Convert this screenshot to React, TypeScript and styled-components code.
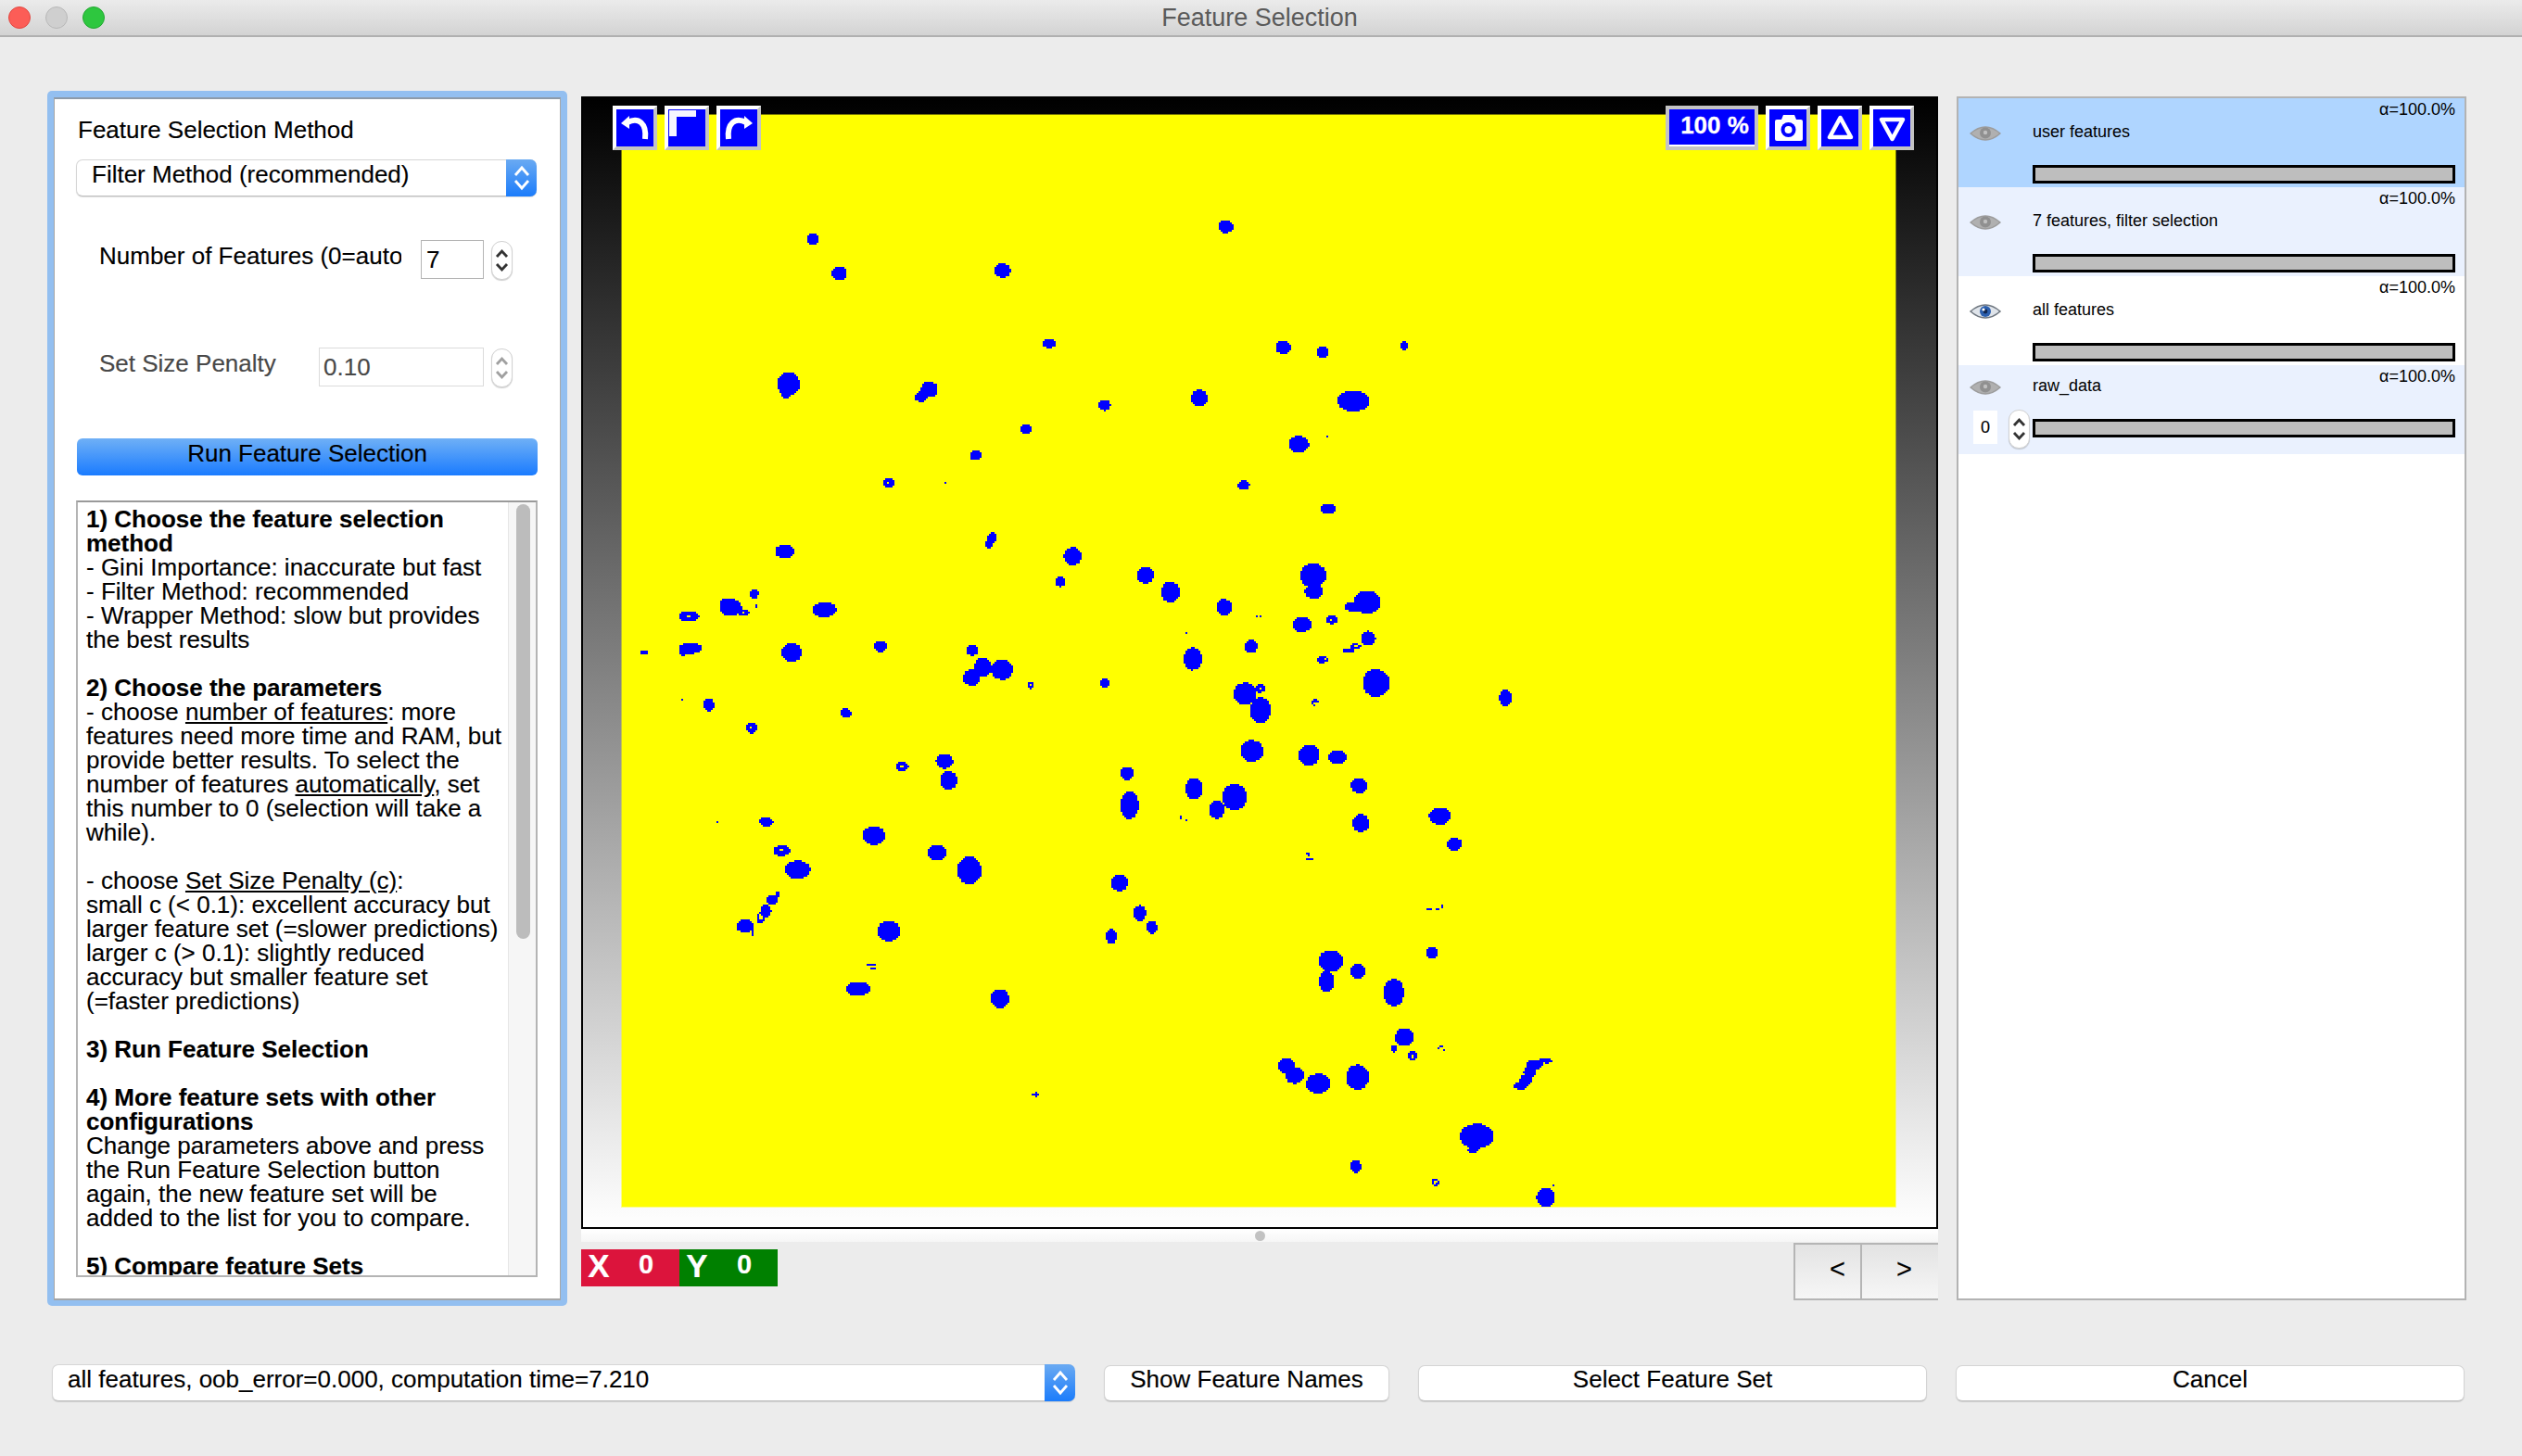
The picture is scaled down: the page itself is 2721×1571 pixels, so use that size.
import React from "react";
import styled, { createGlobalStyle } from "styled-components";

const IMG_W = 1374;
const IMG_H = 1178;
const IMG_X = 671;
const IMG_Y = 124;
const CELL = 2;

type Blob = [number, number, number, number];
interface Zone { ox: number; oy: number; fx: number; fy: number; blobs: Blob[]; holes?: Blob[] }

const zones: Zone[] = [
  {
    ox: 670, oy: 200, fx: 2.24, fy: 2.613,
    blobs: [
      [463,151,14,16],[527,248,18,19],[922,240,19,20],[1462,116,18,18],[1035,446,16,13],
      [405,560,27,32],[399,590,12,10],[745,575,20,22],[725,598,15,12],[733,588,14,14],[1169,620,14,15],
      [1398,600,20,23],[978,687,14,13],[857,761,14,14],[647,838,13,13],[783,838,2,2],
      [1505,845,14,14],[897,993,10,14],[889,1010,9,12],[395,1032,22,19],[1092,1046,21,25],
      [1062,1118,11,14],[1267,1099,20,23],[1328,1147,22,29],[1458,1190,18,23],[1536,1215,2,2],
      [1545,1215,2,2],[1368,1264,3,3],[1523,1300,15,18],[1382,1335,22,31],[322,1152,10,13],
      [165,1215,24,15],[265,1190,26,24],[250,1178,10,12],[295,1204,14,9],[334,1176,2,4],[328,1186,3,3],
      [492,1196,28,21],[168,1305,27,15],[150,1310,10,16],[56,1318,9,6],[413,1317,24,26],
      [627,1300,15,15],[849,1311,14,15],[875,1358,20,26],[847,1388,20,22],[921,1365,26,28],
      [990,1410,8,10],[1169,1403,11,12],[1508,1433,27,30],[1545,1418,12,12],[1545,1480,25,35],
      [147,1449,2,2],[212,1464,13,18],[543,1488,13,13],
    ],
    holes: [[645,838,2,2],[163,1215,5,3],[295,1204,3,3],[325,1152,2,3],[990,1410,2,3],[1545,1418,3,3],[55,1323,3,2]],
  },
  {
    ox: 1370, oy: 200, fx: 2.24, fy: 2.613,
    blobs: [
      [32,457,18,18],[128,470,13,16],[325,452,8,12],[202,608,38,29],[70,730,24,23],[138,708,2,2],
      [140,912,18,14],[105,1100,31,33],[107,1145,22,20],[235,1175,32,32],[205,1188,24,13],
      [78,1238,22,21],[150,1225,13,12],[238,1277,17,20],[190,1311,13,7],[207,1300,14,7],
      [127,1337,13,10],[257,1403,32,38],[110,1458,10,9],[570,1445,15,23],
    ],
    holes: [[148,1225,3,3],[208,1298,3,3],[325,445,2,8],[135,1337,6,2],[112,1462,5,4]],
  },
  {
    ox: 670, oy: 780, fx: 2.24, fy: 2.904,
    blobs: [
      [315,15,13,17],[782,120,20,22],[680,137,15,14],[792,180,20,28],[1525,88,27,33],[1223,158,17,20],
      [1229,258,22,42],[1385,206,21,32],[1483,232,29,40],[1440,272,18,28],[1353,295,2,6],[1365,304,2,2],
      [233,311,2,3],[351,310,16,15],[611,353,27,28],[764,407,22,25],[388,400,20,16],[842,462,29,42],
      [427,460,30,28],[1205,501,20,26],[1254,596,15,24],[1283,640,13,20],[1185,668,13,23],[378,537,5,8],
      [365,555,12,16],[350,590,13,20],[338,612,9,18],[300,637,20,21],[317,655,2,12],[647,652,27,32],[605,758,10,2],[610,769,6,2],
      [573,833,28,22],[916,864,22,29],[1004,1165,5,8],[995,1163,2,2],
    ],
    holes: [[678,137,4,3],[387,398,4,3],[315,15,3,3],[338,608,3,10]],
  },
  {
    ox: 1370, oy: 780, fx: 2.24, fy: 2.904,
    blobs: [
      [95,101,25,32],[163,107,22,21],[216,197,20,23],[220,314,20,27],[411,292,26,26],[446,380,18,20],
      [92,412,3,5],[96,426,8,3],[385,585,6,3],[405,583,4,2],[416,575,2,6],[392,720,13,17],
      [147,746,29,33],[137,810,18,34],[213,778,18,23],[300,845,24,42],[325,985,22,27],[300,1020,6,12],
      [415,1012,3,4],[408,1018,2,2],[420,1024,2,2],[345,1043,11,13],[40,1075,20,24],[60,1105,22,25],
      [117,1130,29,30],[212,1110,27,38],[665,1058,16,9],[640,1070,20,15],[628,1095,14,20],[618,1120,14,18],[605,1137,15,12],
      [500,1295,40,38],[490,1340,12,8],[208,1390,13,20],[400,1440,10,10],[667,1487,22,30],[685,1448,2,2],
    ],
    holes: [[345,1043,2,6],[400,1440,4,4],[663,1066,2,2]],
  },
];

function buildBlobPath(): string {
  const cols = Math.ceil(IMG_W / CELL);
  const rows = Math.ceil(IMG_H / CELL);
  const filled = new Set<number>();
  const apply = (b: Blob, z: Zone, add: boolean) => {
    const cx = z.ox + b[0] / z.fx - IMG_X;
    const cy = z.oy + b[1] / z.fy - IMG_Y;
    const rx = b[2] / z.fx;
    const ry = b[3] / z.fy;
    const c0 = Math.max(0, Math.floor((cx - rx) / CELL));
    const c1 = Math.min(cols - 1, Math.ceil((cx + rx) / CELL));
    const r0 = Math.max(0, Math.floor((cy - ry) / CELL));
    const r1 = Math.min(rows - 1, Math.ceil((cy + ry) / CELL));
    for (let r = r0; r <= r1; r++) {
      for (let c = c0; c <= c1; c++) {
        const dx = (c * CELL + 1 - cx) / rx;
        const dy = (r * CELL + 1 - cy) / ry;
        if (dx * dx + dy * dy <= 1.05) {
          if (add) filled.add(r * cols + c);
          else filled.delete(r * cols + c);
        }
      }
    }
  };
  zones.forEach((z) => z.blobs.forEach((b) => apply(b, z, true)));
  zones.forEach((z) => (z.holes || []).forEach((b) => apply(b, z, false)));
  const keys = Array.from(filled).sort((a, b) => a - b);
  let d = "";
  let i = 0;
  while (i < keys.length) {
    let j = i;
    while (j + 1 < keys.length && keys[j + 1] === keys[j] + 1 && Math.floor(keys[j + 1] / cols) === Math.floor(keys[i] / cols)) j++;
    const r = Math.floor(keys[i] / cols);
    const c = keys[i] % cols;
    d += `M${c * CELL} ${r * CELL}h${(j - i + 1) * CELL}v${CELL}h${-(j - i + 1) * CELL}z`;
    i = j + 1;
  }
  return d;
}

const blobPath = buildBlobPath();

const Global = createGlobalStyle`
  html, body { margin: 0; padding: 0; background: #ececec; }
  body { font-family: "Liberation Sans", Arial, sans-serif; color: #000; }
  * { box-sizing: border-box; }
`;

const Page = styled.div`
  width: 2721px;
  height: 1571px;
  background: #ececec;
  overflow: hidden;
  font-size: 26px;
  -webkit-text-stroke: 0.15px currentColor;
`;

const TitleBar = styled.header`
  height: 40px;
  display: grid;
  grid-template-columns: 1fr auto 1fr;
  align-items: center;
  padding: 0 8px 2px 9px;
  background: linear-gradient(#ebebeb, #d3d3d3);
  border-bottom: 2px solid #b0b0b0;
`;

const Lights = styled.div`
  display: flex;
  gap: 16px;
`;

const Light = styled.span<{ $c: string; $b: string }>`
  width: 24px;
  height: 24px;
  border-radius: 50%;
  background: ${(p) => p.$c};
  border: 1px solid ${(p) => p.$b};
`;

const Title = styled.div`
  font-size: 27px;
  color: #5a5a5a;
  line-height: 38px;
  padding-right: 4px;
  -webkit-text-stroke: 0;
`;

const Main = styled.main`
  display: flex;
  align-items: flex-start;
  margin-top: 58px;
  padding-left: 51px;
`;

const FocusRing = styled.section`
  width: 561px;
  height: 1311px;
  padding: 7px 7px 6px 7px;
  background: #93bff0;
  border-radius: 5px;
`;

const Panel = styled.div`
  height: 100%;
  background: #fff;
  border: 1px solid #a6a6a6;
  border-top: 2px solid #8d9aa8;
  border-bottom: 2px solid #a6a6a6;
  padding: 18px 24px 0 23px;
  display: flex;
  flex-direction: column;
`;

const Heading = styled.div`
  line-height: 30px;
  height: 30px;
  padding-left: 2px;
`;

const ComboBox = styled.div<{ $w: number }>`
  width: ${(p) => p.$w}px;
  height: 40px;
  flex: none;
  display: flex;
  background: #fff;
  border: 1px solid #d6d6d6;
  border-bottom-color: #bdbdbd;
  border-right: 0;
  border-radius: 7px;
  box-shadow: 0 1px 1px rgba(0, 0, 0, 0.12);
`;

const ComboText = styled.div`
  flex: 1;
  padding-left: 16px;
  line-height: 30px;
  white-space: nowrap;
  overflow: hidden;
`;

const ComboArrow = styled.div`
  width: 33px;
  margin: -1px 0;
  border-radius: 0 7px 7px 0;
  background: linear-gradient(#6aaaf2, #1b7cfb);
  display: flex;
  align-items: center;
  justify-content: center;
`;

const MethodCombo = styled(ComboBox)`
  margin-top: 17px;
`;

const SpinRow = styled.div<{ $input: number; $top: number; $dim?: boolean }>`
  margin-top: ${(p) => p.$top}px;
  height: 43px;
  padding: 0 27px 0 25px;
  display: grid;
  grid-template-columns: 1fr ${(p) => p.$input}px 23px;
  column-gap: 8px;
  align-items: start;
  color: ${(p) => (p.$dim ? "#484848" : "#000")};
`;

const SpinLabel = styled.div`
  max-width: 326px;
  white-space: nowrap;
  overflow: hidden;
  line-height: 35px;
`;

const SpinInput = styled.div<{ $dim?: boolean }>`
  height: 42px;
  border: 1px solid ${(p) => (p.$dim ? "#dcdcdc" : "#b5b5b5")};
  background: #fff;
  padding-left: ${(p) => (p.$dim ? 4 : 5)}px;
  line-height: 40px;
`;

const Stepper = styled.div<{ $h?: number }>`
  width: 23px;
  height: ${(p) => p.$h ?? 42}px;
  margin-top: 1px;
  background: #fff;
  border: 1px solid #d2d2d2;
  border-radius: 11px;
  box-shadow: 0 1px 1px rgba(0, 0, 0, 0.18);
  display: flex;
  align-items: center;
  justify-content: center;
`;

const RunButton = styled.div`
  margin: 55px 0 0 1px;
  height: 40px;
  flex: none;
  border-radius: 6px;
  background: linear-gradient(#6fb0f6, #1a7bff);
  text-align: center;
  line-height: 32px;
`;

const HelpBox = styled.div`
  margin-top: 27px;
  height: 838px;
  flex: none;
  display: flex;
  background: #fff;
  border: 2px solid #b4b4b4;
  border-top-color: #9a9a9a;
`;

const HelpText = styled.div`
  flex: 1;
  overflow: hidden;
  padding: 5px 0 0 9px;
  line-height: 26px;
  white-space: nowrap;
`;

const ScrollTrack = styled.div`
  width: 30px;
  flex: none;
  background: #f6f6f6;
  border-left: 1px solid #e6e6e6;
  padding: 2px 6px 0 8px;
`;

const ScrollThumb = styled.div`
  height: 469px;
  background: #bcbcbc;
  border-radius: 8px;
`;

const Center = styled.section`
  width: 1464px;
  margin: 6px 0 0 15px;
  flex: none;
`;

const Frame = styled.div`
  position: relative;
  height: 1222px;
  border: 2px solid #000;
  background: linear-gradient(#000, #fff);
  padding: 18px 0 0 42px;
`;

const Bitmap = styled.div`
  width: ${IMG_W}px;
  height: ${IMG_H}px;
  background: #ffff00;
  box-shadow: 0 0 0 1px rgba(255, 255, 0, 0.45);
`;

const BitmapSvg = styled.svg`
  display: block;
`;

const Toolbar = styled.div<{ $side: "left" | "right" }>`
  position: absolute;
  top: 8px;
  ${(p) => (p.$side === "left" ? "left: 32px;" : "right: 24px;")}
  display: flex;
  gap: 8px;
`;

const ToolButton = styled.div`
  width: 48px;
  height: 48px;
  background: #0000ff;
  border: 4px solid;
  border-color: #fff #c4c4c4 #c4c4c4 #fff;
`;

const ToolSvg = styled.svg`
  display: block;
  filter: blur(0.45px);
`;

const ZoomBadge = styled.div`
  width: 100px;
  height: 48px;
  background: #0000ff;
  border: 4px solid #c4c4c4;
  box-shadow: inset 0 -2px 0 #fff;
  color: #fff;
  font-weight: 700;
  font-size: 26px;
  line-height: 34px;
  text-align: center;
  padding-left: 6px;
  -webkit-text-stroke: 0.3px #fff;
`;

const Splitter = styled.div`
  height: 14px;
  background: linear-gradient(#fff, #f6f6f6);
  display: flex;
  align-items: center;
  justify-content: center;
`;

const SplitterDot = styled.span`
  width: 11px;
  height: 11px;
  margin-top: 1px;
  border-radius: 50%;
  background: #c2c2c2;
`;

const StatusRow = styled.div`
  display: flex;
  justify-content: space-between;
  align-items: flex-start;
  margin-top: 1px;
`;

const Coords = styled.div`
  display: flex;
  margin-top: 7px;
`;

const Coord = styled.div<{ $bg: string }>`
  width: 106px;
  height: 40px;
  background: ${(p) => p.$bg};
  color: #fff;
  font-weight: 700;
  display: grid;
  grid-template-columns: 38px 1fr;
  align-items: center;
  padding: 0 0 5px 0;
`;

const CoordAxis = styled.span`
  font-size: 35px;
  text-align: center;
  line-height: 36px;
`;

const CoordValue = styled.span`
  font-size: 29px;
  padding-left: 24px;
  line-height: 30px;
  margin-top: -4px;
`;

const NavGroup = styled.div`
  display: flex;
  width: 156px;
  height: 62px;
  border: solid #b5b5b5;
  border-width: 2px 0 2px 2px;
  background: linear-gradient(#e3e3e3, #f6f6f6);
`;

const NavButton = styled.div<{ $w: number; $pad: number; $div?: boolean }>`
  width: ${(p) => p.$w}px;
  padding-left: ${(p) => p.$pad}px;
  border-right: ${(p) => (p.$div ? "2px solid #b5b5b5" : "0")};
  line-height: 53px;
  font-size: 29px;
`;

const LayerPanel = styled.aside`
  width: 550px;
  height: 1299px;
  margin: 6px 0 0 20px;
  flex: none;
  background: #fff;
  border: 2px solid #b3b3b3;
`;

const LayerRow = styled.div<{ $bg: string }>`
  height: 96px;
  display: grid;
  grid-template-columns: 80px 1fr;
  background: ${(p) => p.$bg};
`;

const LayerSide = styled.div<{ $eyeTop: number }>`
  padding: ${(p) => p.$eyeTop}px 0 0 12px;
`;

const EyeSvg = styled.svg`
  display: block;
  filter: blur(0.5px);
`;

const FrameControl = styled.div`
  display: flex;
  align-items: flex-start;
  gap: 12px;
  margin: 14px 0 0 4px;
`;

const FrameInput = styled.div`
  width: 26px;
  height: 36px;
  margin-top: 2px;
  background: #fff;
  text-align: center;
  font-size: 18px;
  line-height: 36px;
`;

const LayerMain = styled.div`
  padding-right: 10px;
`;

const LayerHead = styled.div<{ $h: number; $labelTop: number }>`
  height: ${(p) => p.$h}px;
  display: flex;
  justify-content: space-between;
  align-items: flex-start;
  font-size: 18px;
  line-height: 24px;
  -webkit-text-stroke: 0;
  & > span:first-child {
    margin-top: ${(p) => p.$labelTop}px;
  }
`;

const OpacityBar = styled.div`
  margin-top: 24px;
  height: 20px;
  background: #bebebe;
  border: 3px solid #000;
`;

const Footer = styled.footer`
  display: flex;
  align-items: flex-start;
  margin-top: 63px;
  padding-left: 56px;
  gap: 31px;
`;

const FootButton = styled.div<{ $w: number }>`
  width: ${(p) => p.$w}px;
  height: 39px;
  margin-top: 1px;
  background: #fff;
  border: 1px solid #d4d4d4;
  border-bottom-color: #bdbdbd;
  border-radius: 7px;
  box-shadow: 0 1px 1px rgba(0, 0, 0, 0.12);
  text-align: center;
  line-height: 28px;
`;

const Chevrons: React.FC<{ color: string }> = ({ color }) => (
  <svg width={15} height={30} viewBox="0 0 15 30" fill="none" stroke={color} strokeWidth={2.8}>
    <path d="M2 11 L7.5 5 L13 11" />
    <path d="M2 19 L7.5 25 L13 19" />
  </svg>
);

const ComboChevrons: React.FC = () => (
  <svg width={18} height={30} viewBox="0 0 18 30" fill="none" stroke="#fff" strokeWidth={2.8}>
    <path d="M2 12 L9 4 L16 12" />
    <path d="M2 18 L9 26 L16 18" />
  </svg>
);

const Eye: React.FC<{ active?: boolean }> = ({ active }) => (
  <EyeSvg width={34} height={18} viewBox="0 0 34 18">
    {active ? (
      <>
        <path d="M1 9 Q17 -5 33 9 Q17 23 1 9Z" fill="#dfe4ea" stroke="#6f7780" strokeWidth={1.6} />
        <circle cx={17} cy={9} r={6} fill="#2b5fae" />
        <circle cx={17} cy={9} r={2.4} fill="#10264f" />
        <circle cx={15} cy={7} r={1.6} fill="#fff" />
      </>
    ) : (
      <>
        <path d="M1 9 Q17 -5 33 9 Q17 23 1 9Z" fill="#b0b0b0" stroke="#9c9c9c" strokeWidth={1.4} />
        <circle cx={17} cy={8.5} r={6} fill="#909090" />
        <circle cx={17} cy={8} r={2.2} fill="#c0c0c0" />
      </>
    )}
  </EyeSvg>
);

const Tool: React.FC<{ children: React.ReactNode }> = ({ children }) => (
  <ToolButton>
    <ToolSvg width={40} height={40} viewBox="0 0 40 40">
      {children}
    </ToolSvg>
  </ToolButton>
);

const layers = [
  { name: "user features", bg: "#afd5ff" },
  { name: "7 features, filter selection", bg: "#eaf1fe" },
  { name: "all features", bg: "#ffffff", active: true },
  { name: "raw_data", bg: "#eaf1fe", compact: true },
];

export default function App() {
  return (
    <Page>
      <Global />
      <TitleBar>
        <Lights>
          <Light $c="#fc5d57" $b="#e2463f" />
          <Light $c="#cfcfcf" $b="#b8b8b8" />
          <Light $c="#2ec73f" $b="#22a831" />
        </Lights>
        <Title>Feature Selection</Title>
        <span />
      </TitleBar>
      <Main>
        <FocusRing>
          <Panel>
            <Heading>Feature Selection Method</Heading>
            <MethodCombo $w={497}>
              <ComboText>Filter Method (recommended)</ComboText>
              <ComboArrow>
                <ComboChevrons />
              </ComboArrow>
            </MethodCombo>
            <SpinRow $input={68} $top={47}>
              <SpinLabel>Number of Features (0=auto)</SpinLabel>
              <SpinInput>7</SpinInput>
              <Stepper>
                <Chevrons color="#333" />
              </Stepper>
            </SpinRow>
            <SpinRow $input={178} $top={73} $dim>
              <SpinLabel>Set Size Penalty</SpinLabel>
              <SpinInput $dim>0.10</SpinInput>
              <Stepper>
                <Chevrons color="#a0a0a0" />
              </Stepper>
            </SpinRow>
            <RunButton>Run Feature Selection</RunButton>
            <HelpBox>
              <HelpText>
                <b>1) Choose the feature selection</b>
                <br />
                <b>method</b>
                <br />- Gini Importance: inaccurate but fast
                <br />- Filter Method: recommended
                <br />- Wrapper Method: slow but provides
                <br />the best results
                <br />
                <br />
                <b>2) Choose the parameters</b>
                <br />- choose <u>number of features</u>: more
                <br />features need more time and RAM, but
                <br />provide better results. To select the
                <br />number of features <u>automatically</u>, set
                <br />this number to 0 (selection will take a
                <br />while).
                <br />
                <br />- choose <u>Set Size Penalty (c)</u>:
                <br />small c (&lt; 0.1): excellent accuracy but
                <br />larger feature set (=slower predictions)
                <br />larger c (&gt; 0.1): slightly reduced
                <br />accuracy but smaller feature set
                <br />(=faster predictions)
                <br />
                <br />
                <b>3) Run Feature Selection</b>
                <br />
                <br />
                <b>4) More feature sets with other</b>
                <br />
                <b>configurations</b>
                <br />Change parameters above and press
                <br />the Run Feature Selection button
                <br />again, the new feature set will be
                <br />added to the list for you to compare.
                <br />
                <br />
                <b>5) Compare feature Sets</b>
              </HelpText>
              <ScrollTrack>
                <ScrollThumb />
              </ScrollTrack>
            </HelpBox>
          </Panel>
        </FocusRing>

        <Center>
          <Frame>
            <Bitmap>
              <BitmapSvg width={IMG_W} height={IMG_H} viewBox={`0 0 ${IMG_W} ${IMG_H}`} shapeRendering="crispEdges">
                <path d={blobPath} fill="#0000ff" />
              </BitmapSvg>
            </Bitmap>
            <Toolbar $side="left">
              <Tool>
                <path d="M12 14 C24 8 33 15 31 32" fill="none" stroke="#fff" strokeWidth={6} />
                <path d="M5 15 L14 7 L14 21 Z" fill="#fff" />
              </Tool>
              <Tool>
                <path d="M1 1 H30 V8 H9 V29 H1 Z" fill="#f4f4ff" />
              </Tool>
              <Tool>
                <path d="M28 14 C16 8 7 15 9 32" fill="none" stroke="#fff" strokeWidth={6} />
                <path d="M35 15 L26 7 L26 21 Z" fill="#fff" />
              </Tool>
            </Toolbar>
            <Toolbar $side="right">
              <ZoomBadge>100 %</ZoomBadge>
              <Tool>
                <path d="M6 13 Q6 11 8 11 H13 L15 6 H27 L29 11 H34 Q36 11 36 13 V32 Q36 34 34 34 H8 Q6 34 6 32 Z" fill="#fff" />
                <circle cx={20.5} cy={22} r={8} fill="#0000ff" />
                <circle cx={20.5} cy={22} r={4} fill="#fff" />
              </Tool>
              <Tool>
                <path d="M20.5 9 L9 30 H32 Z" fill="none" stroke="#fff" strokeWidth={4.5} strokeLinejoin="round" />
              </Tool>
              <Tool>
                <path d="M9 11 H32 L20.5 32 Z" fill="none" stroke="#fff" strokeWidth={4.5} strokeLinejoin="round" />
              </Tool>
            </Toolbar>
          </Frame>
          <Splitter>
            <SplitterDot />
          </Splitter>
          <StatusRow>
            <Coords>
              <Coord $bg="#dc143c">
                <CoordAxis>X</CoordAxis>
                <CoordValue>0</CoordValue>
              </Coord>
              <Coord $bg="#008000">
                <CoordAxis>Y</CoordAxis>
                <CoordValue>0</CoordValue>
              </Coord>
            </Coords>
            <NavGroup>
              <NavButton $w={72} $pad={37} $div>
                &lt;
              </NavButton>
              <NavButton $w={82} $pad={37}>
                &gt;
              </NavButton>
            </NavGroup>
          </StatusRow>
        </Center>

        <LayerPanel>
          {layers.map((l) => (
            <LayerRow key={l.name} $bg={l.bg}>
              <LayerSide $eyeTop={l.compact ? 15 : 29}>
                <Eye active={l.active} />
                {l.compact && (
                  <FrameControl>
                    <FrameInput>0</FrameInput>
                    <Stepper $h={42}>
                      <Chevrons color="#333" />
                    </Stepper>
                  </FrameControl>
                )}
              </LayerSide>
              <LayerMain>
                <LayerHead $h={l.compact ? 34 : 48} $labelTop={l.compact ? 10 : 24}>
                  <span>{l.name}</span>
                  <span>α=100.0%</span>
                </LayerHead>
                <OpacityBar />
              </LayerMain>
            </LayerRow>
          ))}
        </LayerPanel>
      </Main>
      <Footer>
        <ComboBox $w={1104}>
          <ComboText>all features, oob_error=0.000, computation time=7.210</ComboText>
          <ComboArrow>
            <ComboChevrons />
          </ComboArrow>
        </ComboBox>
        <FootButton $w={308}>Show Feature Names</FootButton>
        <FootButton $w={549}>Select Feature Set</FootButton>
        <FootButton $w={549}>Cancel</FootButton>
      </Footer>
    </Page>
  );
}
